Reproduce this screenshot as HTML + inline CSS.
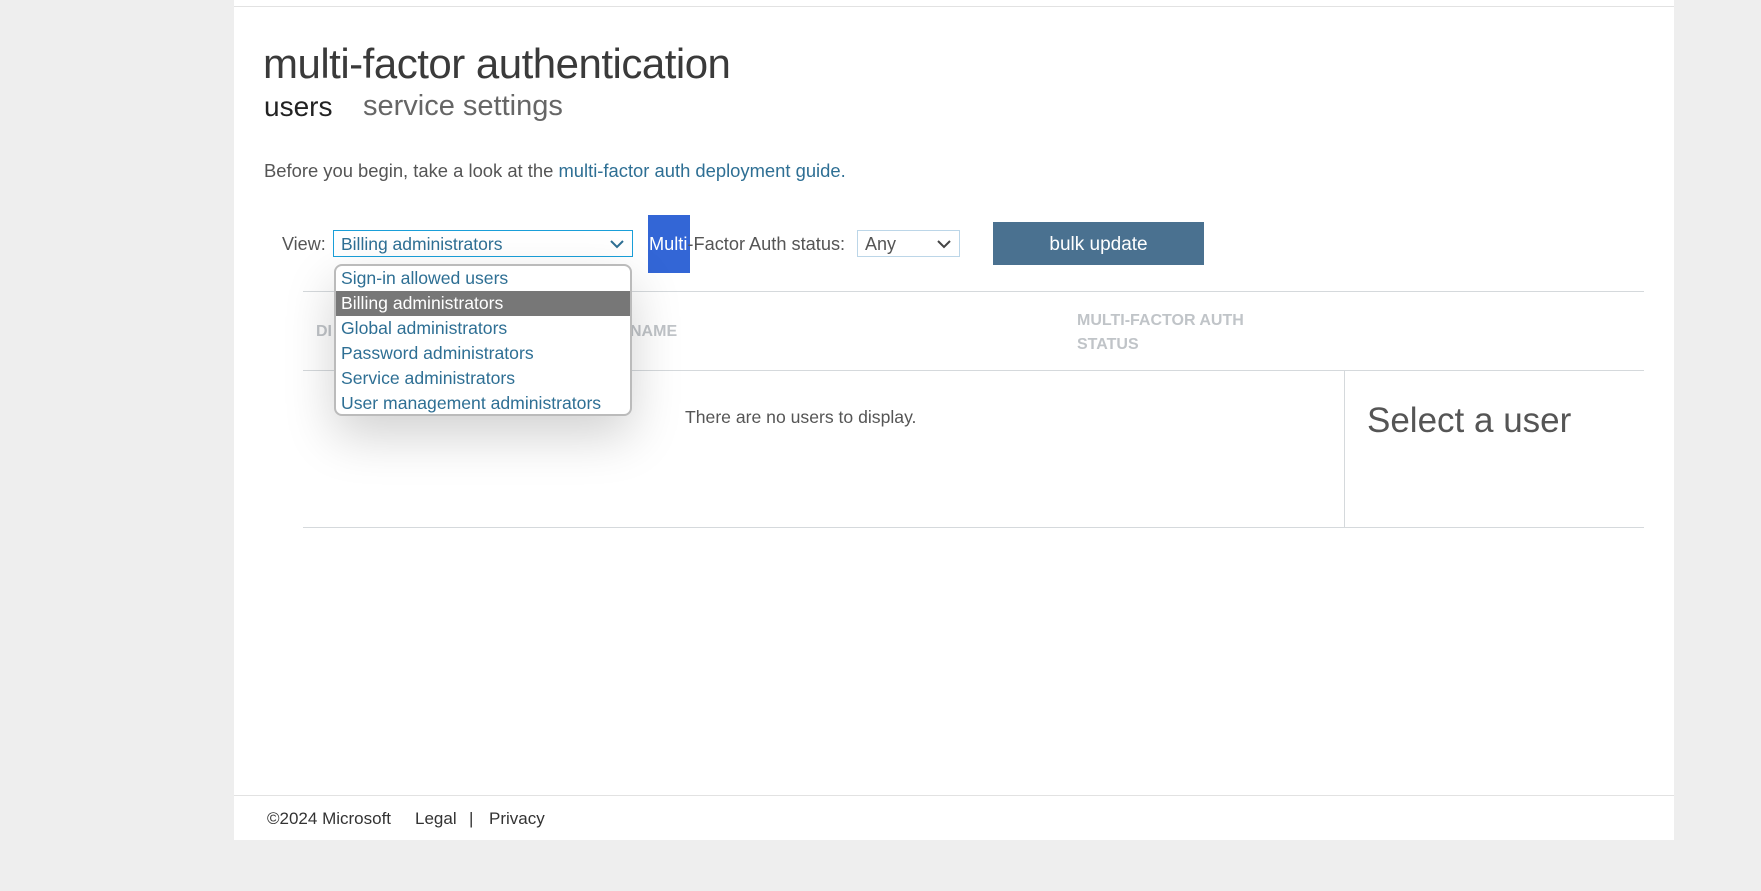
<!DOCTYPE html>
<html><head><meta charset="utf-8"><style>
*{margin:0;padding:0;box-sizing:border-box}
body{width:1761px;height:891px;background:#eeeeee;font-family:"Liberation Sans",sans-serif;position:relative;overflow:hidden;color:#444}
.abs{position:absolute;white-space:nowrap}
#panel{position:absolute;left:234px;top:0;width:1440px;height:840px;background:#fff}
.hl{position:absolute;height:1px;background:#d5d9dc}
</style></head><body>
<div id="panel"></div>
<div class="hl" style="left:234px;top:6px;width:1440px;background:#e2e2e2"></div>
<div class="abs" style="left:263px;top:40px;font-size:42px;color:#3a3a3a;letter-spacing:-0.5px">multi-factor authentication</div>
<div class="abs" style="left:264px;top:91px;font-size:28px;color:#222">users</div>
<div class="abs" style="left:363px;top:90px;font-size:29px;color:#666">service settings</div>
<div class="abs" style="left:264px;top:160px;font-size:18.4px;color:#555">Before you begin, take a look at the <span style="color:#2e6f94">multi-factor auth deployment guide.</span></div>

<div class="abs" style="left:282px;top:234px;font-size:18px;color:#555">View:</div>
<div class="abs" style="left:333px;top:230px;width:300px;height:27px;border:1px solid #1a9fd9;font-size:17.5px;color:#2e6f94;padding:3px 7px">Billing administrators
<svg style="position:absolute;right:8px;top:8px" width="14" height="10"><path d="M1 2 L7 8 L13 2" stroke="#2e6f94" stroke-width="2" fill="none"/></svg></div>
<div class="abs" style="left:648px;top:215px;width:42px;height:58px;background:#3366d6"></div>
<div class="abs" style="left:649px;top:234px;font-size:18.2px;color:#555"><span style="color:#fff">Multi</span>-Factor Auth status:</div>
<div class="abs" style="left:857px;top:230px;width:103px;height:27px;border:1px solid #bcd6e8;font-size:18px;color:#555;padding:3px 7px">Any
<svg style="position:absolute;right:8px;top:8px" width="14" height="10"><path d="M1 2 L7 8 L13 2" stroke="#444" stroke-width="2" fill="none"/></svg></div>
<div class="abs" style="left:993px;top:222px;width:211px;height:43px;background:#4a7190;color:#fff;font-size:19px;text-align:center;line-height:45px">bulk update</div>

<div class="hl" style="left:303px;top:291px;width:1341px"></div>
<div class="abs" style="left:316px;top:323px;font-size:16px;font-weight:bold;color:#c0c4c8">DI</div>
<div class="abs" style="left:630px;top:323px;font-size:16px;font-weight:bold;color:#c0c4c8">NAME</div>
<div class="abs" style="left:1077px;top:309px;font-size:16px;font-weight:bold;color:#c0c4c8;line-height:24px">MULTI-FACTOR AUTH<br>STATUS</div>
<div class="hl" style="left:303px;top:370px;width:1341px"></div>
<div class="abs" style="left:1344px;top:370px;width:1px;height:157px;background:#d5d9dc"></div>
<div class="hl" style="left:303px;top:527px;width:1341px"></div>
<div class="abs" style="left:685px;top:407px;font-size:17.6px;color:#555">There are no users to display.</div>
<div class="abs" style="left:1367px;top:401px;font-size:35px;color:#555">Select a user</div>

<div class="abs" style="left:334px;top:264px;width:298px;height:152px;background:#fff;border:2px solid #bbb;border-radius:8px;box-shadow:0 20px 50px rgba(0,0,0,0.18);overflow:hidden;font-size:17.6px;color:#2e6f94;line-height:25px">
<div style="padding-left:5px">Sign-in allowed users</div>
<div style="padding-left:5px;background:#777;color:#fff">Billing administrators</div>
<div style="padding-left:5px">Global administrators</div>
<div style="padding-left:5px">Password administrators</div>
<div style="padding-left:5px">Service administrators</div>
<div style="padding-left:5px">User management administrators</div>
</div>

<div class="hl" style="left:234px;top:795px;width:1440px;background:#e2e2e2"></div>
<div class="abs" style="left:267px;top:809px;font-size:17px;color:#333">©2024 Microsoft</div>
<div class="abs" style="left:415px;top:809px;font-size:17px;color:#333">Legal</div>
<div class="abs" style="left:469px;top:809px;font-size:17px;color:#333">|</div>
<div class="abs" style="left:489px;top:809px;font-size:17px;color:#333">Privacy</div>
</body></html>
